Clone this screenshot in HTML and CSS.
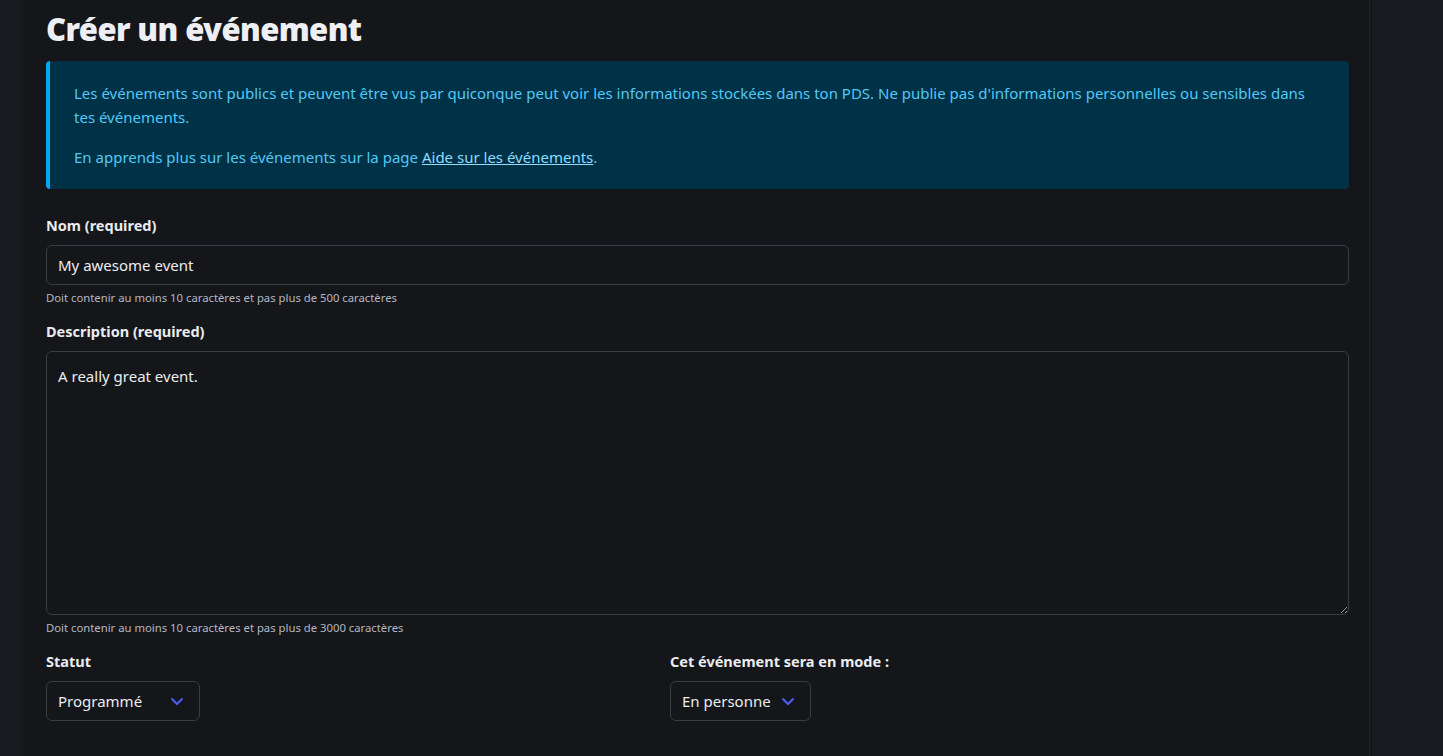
FILE: index.html
```html
<!DOCTYPE html>
<html lang="fr">
<head>
  <meta charset="UTF-8">
  <meta name="viewport" content="width=device-width, initial-scale=1.0">
  <title>Créer un événement</title>
  <link rel="stylesheet" href="styles.css">
</head>
<body>
  <div class="page">
    <section class="content">
      <h1 class="title">Créer un événement</h1>

      <div class="notification">
        <p>Les événements sont publics et peuvent être vus par quiconque peut voir les informations stockées dans ton PDS. Ne publie pas d'informations personnelles ou sensibles dans tes événements.</p>
        <p>En apprends plus sur les événements sur la page <a href="#">Aide sur les événements</a>.</p>
      </div>

      <div class="field">
        <label class="label" for="name">Nom (required)</label>
        <input class="input" id="name" type="text" value="My awesome event">
        <p class="help">Doit contenir au moins 10 caractères et pas plus de 500 caractères</p>
      </div>

      <div class="field">
        <label class="label" for="desc">Description (required)</label>
        <textarea class="textarea" id="desc">A really great event.</textarea>
        <p class="help">Doit contenir au moins 10 caractères et pas plus de 3000 caractères</p>
      </div>

      <div class="columns">
        <div class="field">
          <label class="label">Statut</label>
          <div class="select">
            <span class="select-value wide">Programmé</span>
            <svg width="14" height="9" viewBox="0 0 14 9"><path d="M1.5 1.5 L7 7 L12.5 1.5" fill="none" stroke="#4a5cf2" stroke-width="2.2"/></svg>
          </div>
        </div>
        <div class="field">
          <label class="label">Cet événement sera en mode :</label>
          <div class="select">
            <span class="select-value">En personne</span>
            <svg width="14" height="9" viewBox="0 0 14 9"><path d="M1.5 1.5 L7 7 L12.5 1.5" fill="none" stroke="#4a5cf2" stroke-width="2.2"/></svg>
          </div>
        </div>
      </div>
    </section>
  </div>
</body>
</html>
```

FILE: styles.css
```css
* { margin: 0; padding: 0; box-sizing: border-box; }
html, body {
  height: 100%;
  background: #1b1c21;
  font-family: "Noto Sans", "Open Sans", sans-serif;
  color: #ebecf0;
  overflow: hidden;
}

/* main column */
.page {
  margin-left: 25px;
  width: 1345px;
  height: 100%;
  background: #14161a;
  box-shadow: 0 0 10px rgba(0,0,0,0.45);
  border-right: 1px solid #22232a;
}
.content { padding: 8px 20px 0 21px; }

.title {
  font-size: 31px;
  font-weight: 900;
  line-height: 42px;
  color: #eeeff4;
  margin-bottom: 11px;
  letter-spacing: -0.6px;
}

/* info box */
.notification {
  background: #003247;
  border-left: 4px solid #00a9f2;
  border-radius: 4px;
  padding: 20px 40px 20px 24px;
  color: #53c8f5;
  font-size: 15px;
  line-height: 24px;
  margin-bottom: 24px;
}
.notification p + p { margin-top: 16px; }
.notification a { color: #8fdcff; text-decoration: underline; }

/* form */
.field { margin-bottom: 12px; }
.label {
  display: block;
  font-size: 14.5px;
  font-weight: 700;
  line-height: 24px;
  margin-bottom: 8px;
  color: #ebecf0;
}
.input, .textarea {
  display: block;
  width: 100%;
  background: #14161a;
  border: 1px solid #3a3b45;
  border-radius: 6px;
  color: #ebecf0;
  font-family: inherit;
  font-size: 15px;
  outline: none;
}
.input { height: 40px; padding: 0 11px; }
.textarea { height: 264px; padding: 13px 11px; line-height: 22px; resize: vertical; }
.help {
  font-size: 11.3px;
  line-height: 18px;
  margin-top: 4px;
  color: #b4b6c2;
}

.columns {
  display: grid;
  grid-template-columns: 624px 1fr;
}
.select {
  display: inline-flex;
  align-items: center;
  height: 40px;
  padding: 0 15px 0 11px;
  border: 1px solid #3a3b45;
  border-radius: 6px;
  font-size: 15px;
  color: #ebecf0;
}
.select-value { margin-right: 10px; }
.select-value.wide { width: 102px; }
.select svg { display: block; }
```
